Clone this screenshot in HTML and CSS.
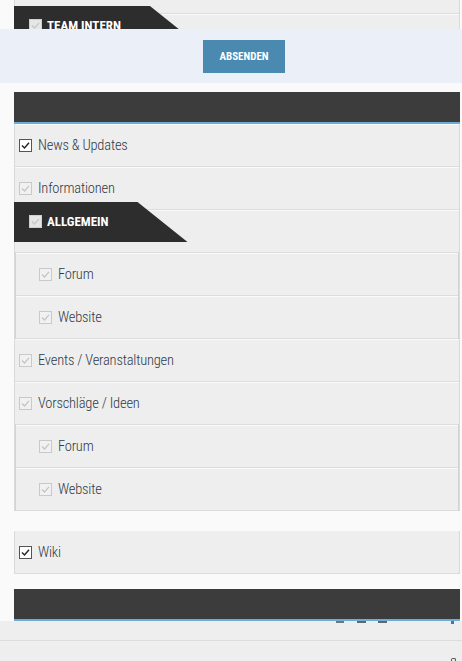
FILE: index.html
```html
<!DOCTYPE html>
<html lang="de">
<head>
<meta charset="utf-8">
<title>Benachrichtigungen</title>
<link rel="stylesheet" href="styles.css">
</head>
<body>
  <div class="top-clip">
    <div class="panel">
      <div class="row tail"></div>
      <div class="group">
        <div class="tab">
          <svg class="cb cb-tab" viewBox="0 0 13 13"><rect x="0.5" y="0.5" width="12" height="12"/><polyline points="3,6.5 5.5,9 10,3.8"/></svg>
          <span>Team intern</span>
        </div>
      </div>
    </div>
  </div>

  <div class="submit-bar">
    <button class="btn" type="button">Absenden</button>
  </div>

  <div class="section-head"></div>
  <div class="panel">
    <div class="row">
      <svg class="cb cb-on" viewBox="0 0 13 13"><rect x="0.5" y="0.5" width="12" height="12"/><polyline points="3,6.5 5.5,9 10,3.8"/></svg>
      <span>News &amp; Updates</span>
    </div>
    <div class="row">
      <svg class="cb cb-off" viewBox="0 0 13 13"><rect x="0.5" y="0.5" width="12" height="12"/><polyline points="3,6.5 5.5,9 10,3.8"/></svg>
      <span>Informationen</span>
    </div>
    <div class="group">
      <div class="tab">
        <svg class="cb cb-tab" viewBox="0 0 13 13"><rect x="0.5" y="0.5" width="12" height="12"/><polyline points="3,6.5 5.5,9 10,3.8"/></svg>
        <span>Allgemein</span>
      </div>
    </div>
    <div class="sublist">
      <div class="row sub">
        <svg class="cb cb-off" viewBox="0 0 13 13"><rect x="0.5" y="0.5" width="12" height="12"/><polyline points="3,6.5 5.5,9 10,3.8"/></svg>
        <span>Forum</span>
      </div>
      <div class="row sub">
        <svg class="cb cb-off" viewBox="0 0 13 13"><rect x="0.5" y="0.5" width="12" height="12"/><polyline points="3,6.5 5.5,9 10,3.8"/></svg>
        <span>Website</span>
      </div>
    </div>
    <div class="row">
      <svg class="cb cb-off" viewBox="0 0 13 13"><rect x="0.5" y="0.5" width="12" height="12"/><polyline points="3,6.5 5.5,9 10,3.8"/></svg>
      <span>Events / Veranstaltungen</span>
    </div>
    <div class="row">
      <svg class="cb cb-off" viewBox="0 0 13 13"><rect x="0.5" y="0.5" width="12" height="12"/><polyline points="3,6.5 5.5,9 10,3.8"/></svg>
      <span>Vorschläge / Ideen</span>
    </div>
    <div class="sublist">
      <div class="row sub">
        <svg class="cb cb-off" viewBox="0 0 13 13"><rect x="0.5" y="0.5" width="12" height="12"/><polyline points="3,6.5 5.5,9 10,3.8"/></svg>
        <span>Forum</span>
      </div>
      <div class="row sub">
        <svg class="cb cb-off" viewBox="0 0 13 13"><rect x="0.5" y="0.5" width="12" height="12"/><polyline points="3,6.5 5.5,9 10,3.8"/></svg>
        <span>Website</span>
      </div>
    </div>
  </div>

  <div class="panel wiki-panel">
    <div class="row">
      <svg class="cb cb-on" viewBox="0 0 13 13"><rect x="0.5" y="0.5" width="12" height="12"/><polyline points="3,6.5 5.5,9 10,3.8"/></svg>
      <span>Wiki</span>
    </div>
  </div>

  <div class="section-head second"></div>
  <div class="bottom">
    <div class="bottom-row">
      <span class="bit bit-a"></span>
      <span class="bit bit-b"></span>
      <span class="bit bit-c"></span>
      <span class="bit bit-d"></span>
    </div>
    <div class="bottom-row last">
      <span class="glyph"></span>
    </div>
  </div>
</body>
</html>
```

FILE: styles.css
```css
* { box-sizing: border-box; }

html, body {
  margin: 0;
  padding: 0;
  background: #fafafa;
  overflow: hidden;
}

body {
  width: 462px;
  height: 661px;
  font-family: "Roboto Condensed", "DejaVu Sans Condensed", "Liberation Sans", sans-serif;
  color: #2e3a47;
}

.top-clip {
  height: 29px;
  overflow: hidden;
}

.panel {
  margin: 0 2px 0 14px;
  border-left: 1px solid #dadada;
  border-right: 1px solid #dadada;
}

.row {
  display: flex;
  align-items: center;
  gap: 6px;
  height: 43px;
  padding: 0 0 0 4px;
  background: #eeeeee;
  border-top: 1px solid #fafafa;
  border-bottom: 1px solid #dcdcdc;
  font-size: 14.5px;
  font-weight: 300;
  letter-spacing: -0.2px;
}

.row.tail {
  height: 14px;
  border-top: 0;
}

.group {
  height: 43px;
  background: #eeeeee;
  border-top: 1px solid #fafafa;
  border-bottom: 1px solid #dcdcdc;
}

.tab {
  position: relative;
  display: inline-flex;
  align-items: center;
  gap: 5px;
  height: 40px;
  margin: -9px 0 0 -1px;
  padding: 0 79px 1px 15px;
  background: #2d2d2d;
  color: #ffffff;
  font-weight: bold;
  font-size: 13px;
  text-transform: uppercase;
  clip-path: polygon(0 0, calc(100% - 50px) 0, 100% 100%, 0 100%);
}

.sublist {
  border-left: 1px solid #d4d4d4;
  border-right: 1px solid #d4d4d4;
}

.row.sub {
  padding-left: 23px;
}

.cb {
  width: 13px;
  height: 13px;
  flex: none;
  margin-top: -1px;
}

.cb rect { stroke-width: 1; }
.cb polyline { fill: none; stroke-width: 1.2; }

.cb-on rect { fill: #ffffff; stroke: #555555; }
.cb-on polyline { stroke: #222222; stroke-width: 1.4; }

.cb-off rect { fill: #f1f1f1; stroke: #c9c9c9; }
.cb-off polyline { stroke: #c4c4c4; }

.cb-tab rect { fill: #e6e6e6; stroke: #d0d0d0; }
.cb-tab polyline { stroke: #c8c8c8; }

.submit-bar {
  display: flex;
  justify-content: center;
  align-items: flex-start;
  height: 54px;
  padding: 11px 0 0 26px;
  background: #ebeff7;
}

.btn {
  width: 82px;
  height: 33px;
  border: 0;
  background: #4a8ab0;
  color: #ffffff;
  font-family: "Roboto Condensed", "DejaVu Sans Condensed", "Liberation Sans", sans-serif;
  font-weight: bold;
  font-size: 11px;
  text-transform: uppercase;
  padding: 0;
}

.section-head {
  height: 32px;
  margin: 9px 2px 0 14px;
  background: #3c3c3c;
  border-bottom: 2px solid #6aadd6;
}

.wiki-panel {
  margin-top: 20px;
}

.wiki-panel .row {
  border-top: 1px solid #eeeeee;
}

.section-head.second {
  margin-top: 15px;
}

.bottom {
  background: #eeeeee;
}

.bottom-row {
  display: flex;
  align-items: flex-start;
  height: 20px;
  border-bottom: 1px solid #dcdcdc;
}

.bottom-row.last {
  height: 20px;
  border-bottom: 0;
  justify-content: flex-end;
  align-items: flex-end;
  padding-right: 6px;
}

.bit {
  display: block;
  height: 2px;
  background: #6f7680;
}

.bit-a { width: 8px; margin-left: 336px; }
.bit-b { width: 9px; margin-left: 13px; background: #5f6872; }
.bit-c { width: 9px; margin-left: 12px; background: #5f6872; }
.bit-d { width: 3px; height: 3px; margin-left: 64px; background: #4a6fd0; }

.glyph {
  display: block;
  width: 5px;
  height: 3px;
  border: 1px solid #555;
  border-bottom: 0;
  border-radius: 2px 2px 0 0;
}
```
